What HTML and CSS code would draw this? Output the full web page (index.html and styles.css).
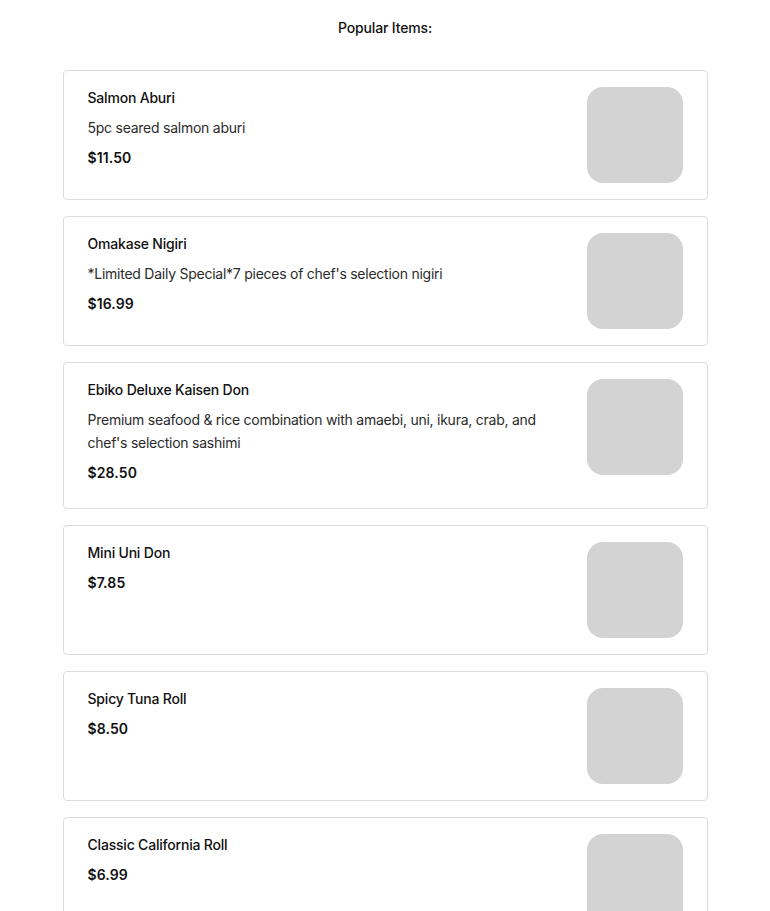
FILE: index.html
```html
<!DOCTYPE html>
<html>
<head>
<meta charset="utf-8">
<link rel="stylesheet" href="styles.css">
</head>
<body>
<div class="page">
  <h2 class="title">Popular Items:</h2>
  <div class="list">
    <div class="card">
      <div class="info">
        <p class="name">Salmon Aburi</p>
        <p class="desc">5pc seared salmon aburi</p>
        <p class="price">$11.50</p>
      </div>
      <div class="thumb"></div>
    </div>
    <div class="card">
      <div class="info">
        <p class="name">Omakase Nigiri</p>
        <p class="desc">*Limited Daily Special*7 pieces of chef's selection nigiri</p>
        <p class="price">$16.99</p>
      </div>
      <div class="thumb"></div>
    </div>
    <div class="card">
      <div class="info">
        <p class="name">Ebiko Deluxe Kaisen Don</p>
        <p class="desc">Premium seafood &amp; rice combination with amaebi, uni, ikura, crab, and chef's selection sashimi</p>
        <p class="price">$28.50</p>
      </div>
      <div class="thumb"></div>
    </div>
    <div class="card">
      <div class="info">
        <p class="name">Mini Uni Don</p>
        <p class="price">$7.85</p>
      </div>
      <div class="thumb"></div>
    </div>
    <div class="card">
      <div class="info">
        <p class="name">Spicy Tuna Roll</p>
        <p class="price">$8.50</p>
      </div>
      <div class="thumb"></div>
    </div>
    <div class="card">
      <div class="info">
        <p class="name">Classic California Roll</p>
        <p class="price">$6.99</p>
      </div>
      <div class="thumb"></div>
    </div>
  </div>
</div>
</body>
</html>
```
FILE: styles.css
```css
html, body {
  margin: 0;
  padding: 0;
  background: #ffffff;
}
body {
  font-family: Inter, "Liberation Sans", sans-serif;
  color: #111;
  font-size: 14px;
  line-height: 22.5px;
  letter-spacing: -0.2px;
}
.page {
  width: 645px;
  margin: 0 auto;
}
.title {
  margin: 0;
  padding-top: 17px;
  font-size: 14px;
  font-weight: 500;
  line-height: 22px;
  text-align: center;
  color: #111;
  letter-spacing: -0.15px;
}
.list {
  margin-top: 31px;
  display: flex;
  flex-direction: column;
  gap: 16px;
  padding-bottom: 40px;
}
.card {
  display: flex;
  align-items: flex-start;
  justify-content: space-between;
  gap: 24px;
  border: 1px solid #dcdcdc;
  border-radius: 4px;
  padding: 16px 24px 16px 24px;
}
.info {
  flex: 1;
  min-width: 0;
}
.info p {
  margin: 0 0 7.5px 0;
}
.name {
  font-weight: 500;
  color: #111;
}
.desc {
  color: #2b2b2b;
  letter-spacing: -0.25px;
}
.price {
  font-weight: 600;
  color: #111;
  letter-spacing: 0.1px;
}
.thumb {
  flex: none;
  width: 96px;
  height: 96px;
  border-radius: 16px;
  background: #d3d3d3;
}
```
